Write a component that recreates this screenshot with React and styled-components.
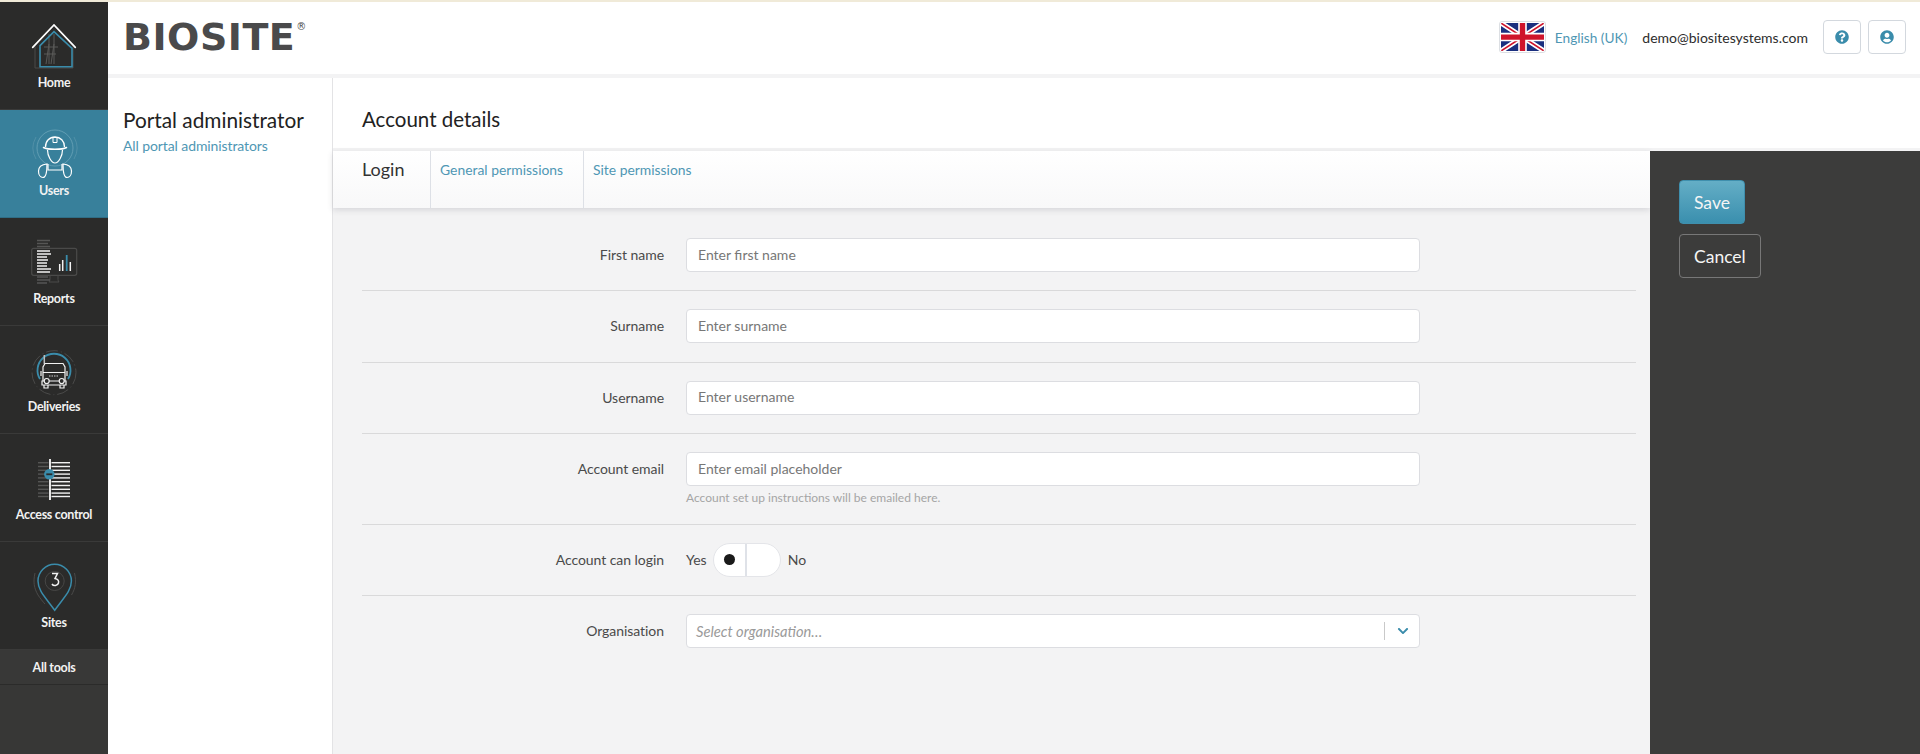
import React from 'react';
import styled, { createGlobalStyle } from 'styled-components';
import { FaQuestionCircle, FaUserCircle, FaChevronDown } from 'react-icons/fa';

const GlobalStyle = createGlobalStyle`
  html, body {
    margin: 0;
    padding: 0;
    height: 100%;
    overflow: hidden;
    font-family: Lato, "Noto Sans", sans-serif;
    background: #f3f3f4;
  }
  * { box-sizing: border-box; }
`;

const Page = styled.div`
  display: grid;
  grid-template-columns: 108px 1fr;
  height: 754px;
  border-top: 2px solid #f0ead8;
`;

/* sidebar */
const Sidebar = styled.nav`
  display: flex;
  flex-direction: column;
  background: #373736;
`;

const NavItem = styled.a`
  display: flex;
  flex-direction: column;
  align-items: center;
  height: 108px;
  padding-top: 18px;
  background: ${(p) => (p.$active ? '#38809b' : '#2b2b2a')};
  border-bottom: 1px solid ${(p) => (p.$active ? '#2f6d85' : '#3a3a39')};
  color: #f2f2f2;
  font-size: 12.5px;
  font-weight: 700;
  letter-spacing: -0.3px;
  line-height: 16px;
  svg { display: block; margin-bottom: -1px; }
`;

const AllTools = styled.a`
  display: flex;
  align-items: center;
  justify-content: center;
  height: 35px;
  background: #383837;
  border-bottom: 1px solid #2b2b2a;
  color: #f2f2f2;
  font-size: 12.5px;
  font-weight: 700;
  letter-spacing: -0.3px;
`;

/* top bar */
const Main = styled.div`
  display: flex;
  flex-direction: column;
  min-width: 0;
`;

const TopBar = styled.header`
  display: flex;
  align-items: center;
  justify-content: space-between;
  height: 76px;
  padding: 0 14px 0 15px;
  background: #fff;
  border-bottom: 4px solid #f3f3f4;
`;

const Logo = styled.div`
  display: flex;
  align-items: flex-start;
  color: #4a4a4b;
  font-family: "DejaVu Sans", "Liberation Sans", sans-serif;
  font-size: 38px;
  font-weight: 700;
  line-height: 38px;
  letter-spacing: 0.5px;
  margin-top: -3px;
  sup {
    font-size: 10px;
    font-weight: 400;
    line-height: 12px;
    letter-spacing: 0;
    margin: 3px 0 0 1px;
  }
`;

const TopRight = styled.div`
  display: flex;
  align-items: center;
  margin-top: -2px;
`;

const Flag = styled.svg`
  width: 47px;
  height: 32px;
  padding: 1px;
  background: #fff;
  border: 1px solid #dcdfe3;
  border-radius: 3px;
  margin-right: 9px;
`;

const Lang = styled.a`
  color: #4f97b4;
  font-size: 13.7px;
  margin-right: 15px;
`;

const Email = styled.span`
  color: #2d2d2d;
  font-size: 14px;
  margin-right: 15px;
`;

const IconButton = styled.button`
  display: flex;
  align-items: center;
  justify-content: center;
  width: 38px;
  height: 34px;
  margin-left: ${(p) => (p.$first ? '0' : '7px')};
  padding: 0;
  background: #fff;
  border: 1px solid #d3d8de;
  border-radius: 4px;
  color: #3a8cab;
  font-size: 14px;
`;

/* body */
const Body = styled.div`
  flex: 1;
  display: grid;
  grid-template-columns: 225px 1fr;
  min-height: 0;
`;

const LeftPanel = styled.aside`
  background: #fff;
  border-right: 1px solid #e3e3e5;
  padding: 29px 15px;
`;

const PanelTitle = styled.h2`
  margin: 0;
  color: #222;
  font-size: 20.8px;
  font-weight: 400;
  line-height: 26px;
`;

const PanelLink = styled.a`
  display: block;
  margin-top: 4px;
  color: #4f97b4;
  font-size: 14px;
  letter-spacing: -0.1px;
  line-height: 18px;
`;

const Content = styled.section`
  display: flex;
  flex-direction: column;
  min-width: 0;
`;

const TitleBand = styled.div`
  display: flex;
  align-items: center;
  height: 73px;
  padding: 12px 0 0 29px;
  background: #fff;
  border-bottom: 3px solid #f3f3f4;
`;

const Title = styled.h1`
  margin: 0;
  color: #222;
  font-size: 20.5px;
  font-weight: 400;
`;

const Split = styled.div`
  flex: 1;
  display: grid;
  grid-template-columns: 1fr 270px;
  min-height: 0;
`;

const FormColumn = styled.div`
  display: flex;
  flex-direction: column;
  min-width: 0;
`;

const Tabs = styled.div`
  display: flex;
  height: 57px;
  background: linear-gradient(#ffffff, #f8f8f9);
  box-shadow: 0 2px 6px rgba(60, 60, 80, 0.16);
`;

const Tab = styled.a`
  display: block;
  padding: ${(p) => (p.$active ? '7px 27px 0 29px' : '10px 0 0 9px')};
  width: ${(p) => p.$w}px;
  border-right: ${(p) => (p.$last ? 'none' : '1px solid #dde0e6')};
  color: ${(p) => (p.$active ? '#333' : '#4f97b4')};
  font-size: ${(p) => (p.$active ? '18px' : '13.9px')};
  line-height: ${(p) => (p.$active ? '22px' : '18px')};
`;

const Form = styled.form`
  padding: 0 14px 0 29px;
`;

const Row = styled.div`
  display: grid;
  grid-template-columns: 302px 734px;
  column-gap: 22px;
  align-items: start;
  padding: 30px 0 18px;
  border-bottom: 1px solid #d9d9da;
  & + & { padding-top: 18px; padding-bottom: 18.5px; }
  &:last-child { border-bottom: none; }
`;

const Label = styled.label`
  color: #4a4a4a;
  font-size: 14px;
  letter-spacing: -0.05px;
  line-height: 34px;
  text-align: right;
`;

const TextInput = styled.input`
  display: block;
  width: 100%;
  height: 34px;
  padding: 0 11px 2px;
  background: #fff;
  border: 1px solid #dcdde1;
  border-radius: 4px;
  color: #333;
  font-family: inherit;
  font-size: 14px;
  &::placeholder { color: #777; opacity: 1; }
`;

const Help = styled.div`
  margin-top: 5px;
  color: #a5a5a5;
  font-size: 12px;
  line-height: 14px;
`;

const ToggleRow = styled.div`
  display: flex;
  align-items: center;
  height: 34px;
  color: #4a4a4a;
  font-size: 14px;
`;

const Toggle = styled.div`
  display: grid;
  grid-template-columns: 1fr 1fr;
  width: 68px;
  height: 34px;
  margin: 0 7px 0 6px;
  background: #fff;
  border: 1px solid #e4e5e9;
  border-radius: 17px;
  overflow: hidden;
`;

const ToggleSide = styled.div`
  display: flex;
  align-items: center;
  justify-content: center;
  border-right: ${(p) => (p.$first ? '2px solid #dfe2e8' : 'none')};
  i {
    width: 11px;
    height: 11px;
    border-radius: 50%;
    background: #1a1a1a;
  }
`;

const Select = styled.div`
  display: flex;
  align-items: center;
  height: 34px;
  padding-left: 9px;
  background: #fff;
  border: 1px solid #dcdde1;
  border-radius: 4px;
`;

const SelectText = styled.span`
  flex: 1;
  color: #9a9a9a;
  font-size: 14.7px;
  font-style: italic;
`;

const Chevron = styled.span`
  display: flex;
  align-items: center;
  height: 18px;
  padding: 0 10px 0 12px;
  border-left: 1px solid #c9c9c9;
  color: #3a8cab;
  font-size: 12px;
`;

const ActionPanel = styled.aside`
  display: flex;
  flex-direction: column;
  align-items: flex-start;
  gap: 10px;
  padding: 29px 29px;
  background: #3c3c3b;
`;

const ActionButton = styled.button`
  height: 44px;
  padding: 0 14px;
  border: 1px solid ${(p) => (p.$primary ? '#3f8fad' : '#777')};
  border-radius: 4px;
  background: ${(p) => (p.$primary ? 'linear-gradient(#64aec6, #3a8fae)' : 'transparent')};
  color: #f5f5f5;
  font-family: inherit;
  font-size: 17.5px;
`;

/* icons */
const NavIcon = ({ children }) => (
  <svg width="72" height="56" viewBox="0 0 72 56" fill="none">
    {children}
  </svg>
);

const HomeIcon = () => (
  <NavIcon>
    <path d="M17 26v22h38V26" stroke="#4a4a49" strokeWidth="1" />
    <path d="M28 44l3-20M33 44l3-20M31 14v30M36 14v30M26 27h14M26 34h12" stroke="#5a5a59" strokeWidth="1" />
    <path d="M22 46.7V25.7L36 11.7l18 16.6v18.4z" stroke="#3a8cab" strokeWidth="1.6" />
    <path d="M14.7 27.3L36 5l21.3 22.3" stroke="#fff" strokeWidth="1.7" strokeLinecap="round" />
  </NavIcon>
);

const UserIcon = () => (
  <NavIcon>
    <circle cx="37" cy="20" r="18" stroke="#6ba4b9" strokeWidth="0.8" />
    <path d="M18 9a22 22 0 0 0 0 22M56 9a22 22 0 0 1 0 22" stroke="#5793aa" strokeWidth="0.8" />
    <path d="M27.5 19c0-6 4-10 9.500-10s9.500 4 9.500 10" fill="#38809b" stroke="#fff" strokeWidth="1.300" />
    <path d="M35 9.500h4v5h-4z" stroke="#fff" strokeWidth="1" />
    <path d="M25.500 19.500c4 2.400 19 2.400 23 0" stroke="#fff" strokeWidth="1.500" strokeLinecap="round" />
    <path d="M29.500 22c0 6 4 13 7.500 13s7.500-7 7.500-13" fill="#38809b" stroke="#fff" strokeWidth="1.200" />
    <path d="M29 36c-5 .5-8.500 3-8.500 7 0 4 2 6.500 4.500 6.500s4-3 4-13.500zM45 36c5 .5 8.500 3 8.500 7 0 4-2 6.500-4.500 6.500s-4-3-4-13.500z" stroke="#fff" strokeWidth="1.200" />
    <path d="M30 36v6h14v-6" stroke="#fff" strokeWidth="1.200" />
  </NavIcon>
);

const ReportIcon = () => (
  <NavIcon>
    <rect x="13.700" y="12.300" width="45" height="27" rx="2" stroke="#4a4a49" strokeWidth="1.200" />
    <path d="M32 39.500v4c0 1-.5 2-1 2.500h10c-.5-.5-1-1.500-1-2.500v-4" stroke="#4a4a49" strokeWidth="1" />
    <path
      d="M19 4.500h13M19 7.500h11M19 10.500h13M19 41h11M19 44h13M19 47h10"
      stroke="#565655"
      strokeWidth="1.300"
    />
    <path
      d="M19 15h13M19 18h14M19 21h10M19 24h11M19 27h10M19 30h10M19 33h14M19 36h13"
      stroke="#f2f2f2"
      strokeWidth="1.400"
    />
    <path d="M41.700 35v-7M44.700 35V24M52.300 35v-9" stroke="#f2f2f2" strokeWidth="1.500" />
    <path d="M48.700 35V19" stroke="#3a8cab" strokeWidth="1.800" />
  </NavIcon>
);

const TruckIcon = () => (
  <NavIcon>
    <circle cx="36" cy="28.700" r="22" stroke="#4a4a49" strokeWidth="1" strokeDasharray="12 3 1 3" />
    <path d="M22 35a16.500 16.500 0 1 1 28 0" stroke="#3a8cab" strokeWidth="1.800" />
    <path d="M26.300 11v9" stroke="#bdbdbd" strokeWidth="1.500" />
    <path d="M25 37V23l2-3.500h18l2 3.500v14" fill="#2b2b2a" stroke="#f2f2f2" strokeWidth="1.200" />
    <path d="M25 28.500h22M23 27v5M49 27v5" stroke="#f2f2f2" strokeWidth="1.200" />
    <path d="M31 32h10" stroke="#d0d0d0" strokeWidth="1" strokeDasharray="1.500 1" />
    <path d="M24 37h24v4H24zM26 41v3h4v-3M42 41v3h4v-3" fill="#2b2b2a" stroke="#f2f2f2" strokeWidth="1.200" />
    <circle cx="28.700" cy="37" r="2.500" fill="#2b2b2a" stroke="#f2f2f2" strokeWidth="1.200" />
    <circle cx="43.700" cy="37" r="2.500" fill="#2b2b2a" stroke="#f2f2f2" strokeWidth="1.200" />
  </NavIcon>
);

const AccessIcon = () => {
  const ys = [10.700, 14.500, 18.300, 22.100, 25.900, 29.700, 33.500, 37.300, 41.100, 44.500];
  return (
    <NavIcon>
      {ys.map((y) => (
        <path key={y} d={`M20 ${y}h10.500`} stroke="#565655" strokeWidth="1.400" />
      ))}
      {ys.map((y) => (
        <path key={y} d={`M33.500 ${y}H52`} stroke="#f2f2f2" strokeWidth="1.400" />
      ))}
      <path d="M32 7v41" stroke="#e6e6e6" strokeWidth="2" />
      <circle cx="31.300" cy="22.300" r="5.200" fill="#3a8cab" />
      <path d="M28.300 22.300h6" stroke="#2b2b2a" strokeWidth="1.800" />
    </NavIcon>
  );
};

const SiteIcon = () => (
  <NavIcon>
    <path d="M17 13c-2 9-1 15 3 22 2 3 5 7 7 9M56.500 13c2 9 1 15-3 22" stroke="#4a4a49" strokeWidth="1" />
    <path
      d="M36.700 50.300C28 38 20 31 20 21a16.700 16.700 0 0 1 33.400 0c0 10-8 17-16.700 29.300z"
      stroke="#3a8cab"
      strokeWidth="1.500"
    />
    <circle cx="36.700" cy="21" r="9.500" stroke="#474746" strokeWidth="1" />
    <path d="M34 13.500h5.500l-2.500 5c3 .5 4 2.500 3.500 4.500-.8 3-5 3.500-6.500 1" stroke="#f2f2f2" strokeWidth="1.500" />
  </NavIcon>
);

const UkFlag = () => (
  <Flag viewBox="0 0 60 40" preserveAspectRatio="none">
    <rect width="60" height="40" fill="#1a2f7f" />
    <path d="M0 0l60 40M60 0L0 40" stroke="#fff" strokeWidth="7" />
    <path d="M0 0l60 40M60 0L0 40" stroke="#cf142b" strokeWidth="2.200" />
    <path d="M30 0v40M0 20h60" stroke="#fff" strokeWidth="12" />
    <path d="M30 0v40M0 20h60" stroke="#cf142b" strokeWidth="7.500" />
  </Flag>
);

const navItems = [
  { label: 'Home', icon: <HomeIcon /> },
  { label: 'Users', icon: <UserIcon />, active: true },
  { label: 'Reports', icon: <ReportIcon /> },
  { label: 'Deliveries', icon: <TruckIcon /> },
  { label: 'Access control', icon: <AccessIcon /> },
  { label: 'Sites', icon: <SiteIcon /> },
];

const App = () => (
  <>
    <GlobalStyle />
    <Page>
      <Sidebar>
        {navItems.map((item) => (
          <NavItem key={item.label} $active={item.active}>
            {item.icon}
            {item.label}
          </NavItem>
        ))}
        <AllTools>All tools</AllTools>
      </Sidebar>

      <Main>
        <TopBar>
          <Logo>
            BIOSITE<sup>®</sup>
          </Logo>
          <TopRight>
            <UkFlag />
            <Lang>English (UK)</Lang>
            <Email>demo@biositesystems.com</Email>
            <IconButton $first type="button">
              <FaQuestionCircle />
            </IconButton>
            <IconButton type="button">
              <FaUserCircle />
            </IconButton>
          </TopRight>
        </TopBar>

        <Body>
          <LeftPanel>
            <PanelTitle>Portal administrator</PanelTitle>
            <PanelLink>All portal administrators</PanelLink>
          </LeftPanel>

          <Content>
            <TitleBand>
              <Title>Account details</Title>
            </TitleBand>
            <Split>
              <FormColumn>
                <Tabs>
                  <Tab $active $w={98}>Login</Tab>
                  <Tab $w={153}>General permissions</Tab>
                  <Tab $last $w={160}>Site permissions</Tab>
                </Tabs>
                <Form>
                  <Row>
                    <Label>First name</Label>
                    <TextInput placeholder="Enter first name" />
                  </Row>
                  <Row>
                    <Label>Surname</Label>
                    <TextInput placeholder="Enter surname" />
                  </Row>
                  <Row>
                    <Label>Username</Label>
                    <TextInput placeholder="Enter username" />
                  </Row>
                  <Row>
                    <Label>Account email</Label>
                    <div>
                      <TextInput placeholder="Enter email placeholder" />
                      <Help>Account set up instructions will be emailed here.</Help>
                    </div>
                  </Row>
                  <Row>
                    <Label>Account can login</Label>
                    <ToggleRow>
                      Yes
                      <Toggle>
                        <ToggleSide $first>
                          <i />
                        </ToggleSide>
                        <ToggleSide />
                      </Toggle>
                      No
                    </ToggleRow>
                  </Row>
                  <Row>
                    <Label>Organisation</Label>
                    <Select>
                      <SelectText>Select organisation…</SelectText>
                      <Chevron>
                        <FaChevronDown />
                      </Chevron>
                    </Select>
                  </Row>
                </Form>
              </FormColumn>
              <ActionPanel>
                <ActionButton $primary type="button">Save</ActionButton>
                <ActionButton type="button">Cancel</ActionButton>
              </ActionPanel>
            </Split>
          </Content>
        </Body>
      </Main>
    </Page>
  </>
);

export default App;
